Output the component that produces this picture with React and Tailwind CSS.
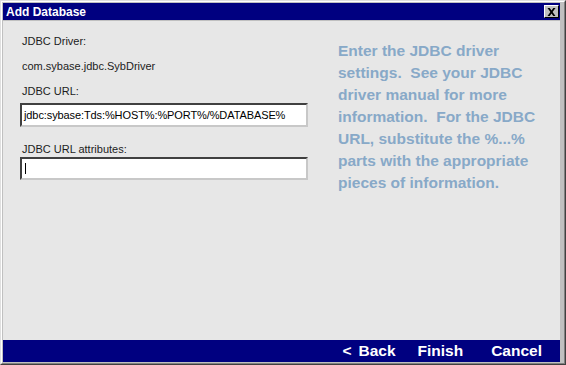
export default function App() {
  const sans = { fontFamily: '"Liberation Sans", Arial, sans-serif' };
  return (
    <div
      className="w-[566px] h-[365px] bg-[#c0c0c0] border border-t-[#dfdfdf] border-l-[#dfdfdf] border-r-[#404040] border-b-[#404040] flex flex-col overflow-hidden"
      style={sans}
    >
      <div className="flex-1 flex flex-col border border-t-white border-l-white border-r-[#808080] border-b-[#808080] pl-px pt-px pr-[4px] pb-px">
        {/* Title bar */}
        <div className="h-[17px] bg-[#000080] flex items-center justify-between pl-[3px] pr-[1px]">
          <span className="text-white font-bold text-[12px] leading-none">Add Database</span>
          <div className="w-[15px] h-[13px] bg-[#c0c0c0] border border-t-white border-l-white border-r-black border-b-black flex items-center justify-center">
            <svg width="9" height="8" viewBox="0 0 9 8">
              <path d="M0.5 0h2.2l1.8 2.4 1.8-2.4h2.2L5.6 4 8.5 8H6.3L4.5 5.6 2.7 8H0.5l2.9-4z" fill="#000" />
            </svg>
          </div>
        </div>
        {/* Content */}
        <div className="mt-px flex-1 bg-[#e7e7e7] flex pl-[17px] pt-[14px]">
          <div className="w-[288px] flex flex-col text-[11px] text-[#1c1c1c]">
            <div className="leading-[13px] h-[13px] ml-[2px]">JDBC Driver:</div>
            <div className="leading-[13px] h-[13px] ml-[2px] mt-[12px]">com.sybase.jdbc.SybDriver</div>
            <div className="leading-[13px] h-[13px] ml-[2px] mt-[12px]">JDBC URL:</div>
            <div className="mt-[5px] h-[24px] bg-white border-2 border-t-[#404040] border-l-[#404040] border-r-[#c8c8c8] border-b-[#c8c8c8] flex items-center pl-[2px] text-[11px] text-black tracking-[-0.1px]">
              jdbc:sybase:Tds:%HOST%:%PORT%/%DATABASE%
            </div>
            <div className="leading-[13px] h-[13px] ml-[2px] mt-[16px]">JDBC URL attributes:</div>
            <div className="mt-px h-[23px] bg-white border-2 border-t-[#404040] border-l-[#404040] border-r-[#c8c8c8] border-b-[#c8c8c8] flex items-center pl-[3px]">
              <div className="w-px h-[11px] bg-black" />
            </div>
          </div>
          <div className="ml-[30px] mt-[5px] text-[15.5px] font-bold leading-[22px] text-[#88a9c8]">
            <div>Enter the JDBC driver</div>
            <div>settings.&nbsp; See your JDBC</div>
            <div>driver manual for more</div>
            <div>information.&nbsp; For the JDBC</div>
            <div>URL, substitute the %...%</div>
            <div>parts with the appropriate</div>
            <div>pieces of information.</div>
          </div>
        </div>
        {/* Bottom bar */}
        <div className="h-[22px] bg-[#000080] flex items-center justify-end pr-[18px] text-white font-bold text-[15.5px] leading-none">
          <span className="flex gap-[7px]">
            <span>&lt;</span>
            <span>Back</span>
          </span>
          <span className="ml-[22px]">Finish</span>
          <span className="ml-[28px]">Cancel</span>
        </div>
      </div>
    </div>
  );
}
